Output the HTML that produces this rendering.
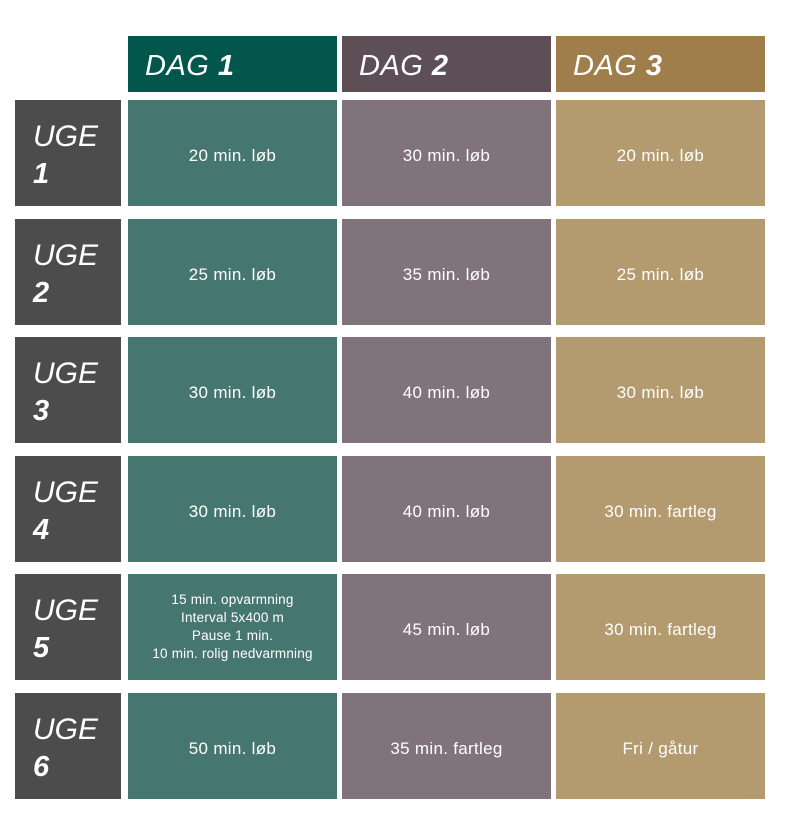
<!DOCTYPE html>
<html><head><style>
body{margin:0;width:796px;height:826px;background:#fff;font-family:"Liberation Sans",sans-serif;position:relative;overflow:hidden}
.b{position:absolute;color:#fff;box-sizing:border-box}
.h{top:36px;height:56px;font-size:29px;font-style:italic;padding-left:17px;line-height:61px;letter-spacing:0.5px}
.h b{font-weight:bold}
.c{display:flex;align-items:center;justify-content:center;text-align:center;font-size:17px;letter-spacing:0.3px;padding-top:5px}
.g{background:#467670}.p{background:#80737b}.t{background:#b39a6f}
.l{background:#4b4c4b;left:15px;width:106px;font-style:italic;font-size:30px;padding:18px 0 0 18px;line-height:37px}
.l b{font-weight:bold;font-size:29px}
.s{font-size:13.5px;line-height:18px;letter-spacing:0.2px;padding-top:0}
</style></head><body>
<div class="b h" style="left:128px;width:209px;background:#03564c">DAG <b>1</b></div>
<div class="b h" style="left:342px;width:209px;background:#5e4f57">DAG <b>2</b></div>
<div class="b h" style="left:556px;width:209px;background:#a07e4c">DAG <b>3</b></div>

<div class="b l" style="top:100px;height:106px">UGE<br><b>1</b></div>
<div class="b c g" style="top:100px;height:106px;left:128px;width:209px">20 min. løb</div>
<div class="b c p" style="top:100px;height:106px;left:342px;width:209px">30 min. løb</div>
<div class="b c t" style="top:100px;height:106px;left:556px;width:209px">20 min. løb</div>

<div class="b l" style="top:219px;height:106px">UGE<br><b>2</b></div>
<div class="b c g" style="top:219px;height:106px;left:128px;width:209px">25 min. løb</div>
<div class="b c p" style="top:219px;height:106px;left:342px;width:209px">35 min. løb</div>
<div class="b c t" style="top:219px;height:106px;left:556px;width:209px">25 min. løb</div>

<div class="b l" style="top:337px;height:106px">UGE<br><b>3</b></div>
<div class="b c g" style="top:337px;height:106px;left:128px;width:209px">30 min. løb</div>
<div class="b c p" style="top:337px;height:106px;left:342px;width:209px">40 min. løb</div>
<div class="b c t" style="top:337px;height:106px;left:556px;width:209px">30 min. løb</div>

<div class="b l" style="top:456px;height:106px">UGE<br><b>4</b></div>
<div class="b c g" style="top:456px;height:106px;left:128px;width:209px">30 min. løb</div>
<div class="b c p" style="top:456px;height:106px;left:342px;width:209px">40 min. løb</div>
<div class="b c t" style="top:456px;height:106px;left:556px;width:209px">30 min. fartleg</div>

<div class="b l" style="top:574px;height:106px">UGE<br><b>5</b></div>
<div class="b c g s" style="top:574px;height:106px;left:128px;width:209px">15 min. opvarmning<br>Interval 5x400 m<br>Pause 1 min.<br>10 min. rolig nedvarmning</div>
<div class="b c p" style="top:574px;height:106px;left:342px;width:209px">45 min. løb</div>
<div class="b c t" style="top:574px;height:106px;left:556px;width:209px">30 min. fartleg</div>

<div class="b l" style="top:693px;height:106px">UGE<br><b>6</b></div>
<div class="b c g" style="top:693px;height:106px;left:128px;width:209px">50 min. løb</div>
<div class="b c p" style="top:693px;height:106px;left:342px;width:209px">35 min. fartleg</div>
<div class="b c t" style="top:693px;height:106px;left:556px;width:209px">Fri / gåtur</div>
</body></html>
